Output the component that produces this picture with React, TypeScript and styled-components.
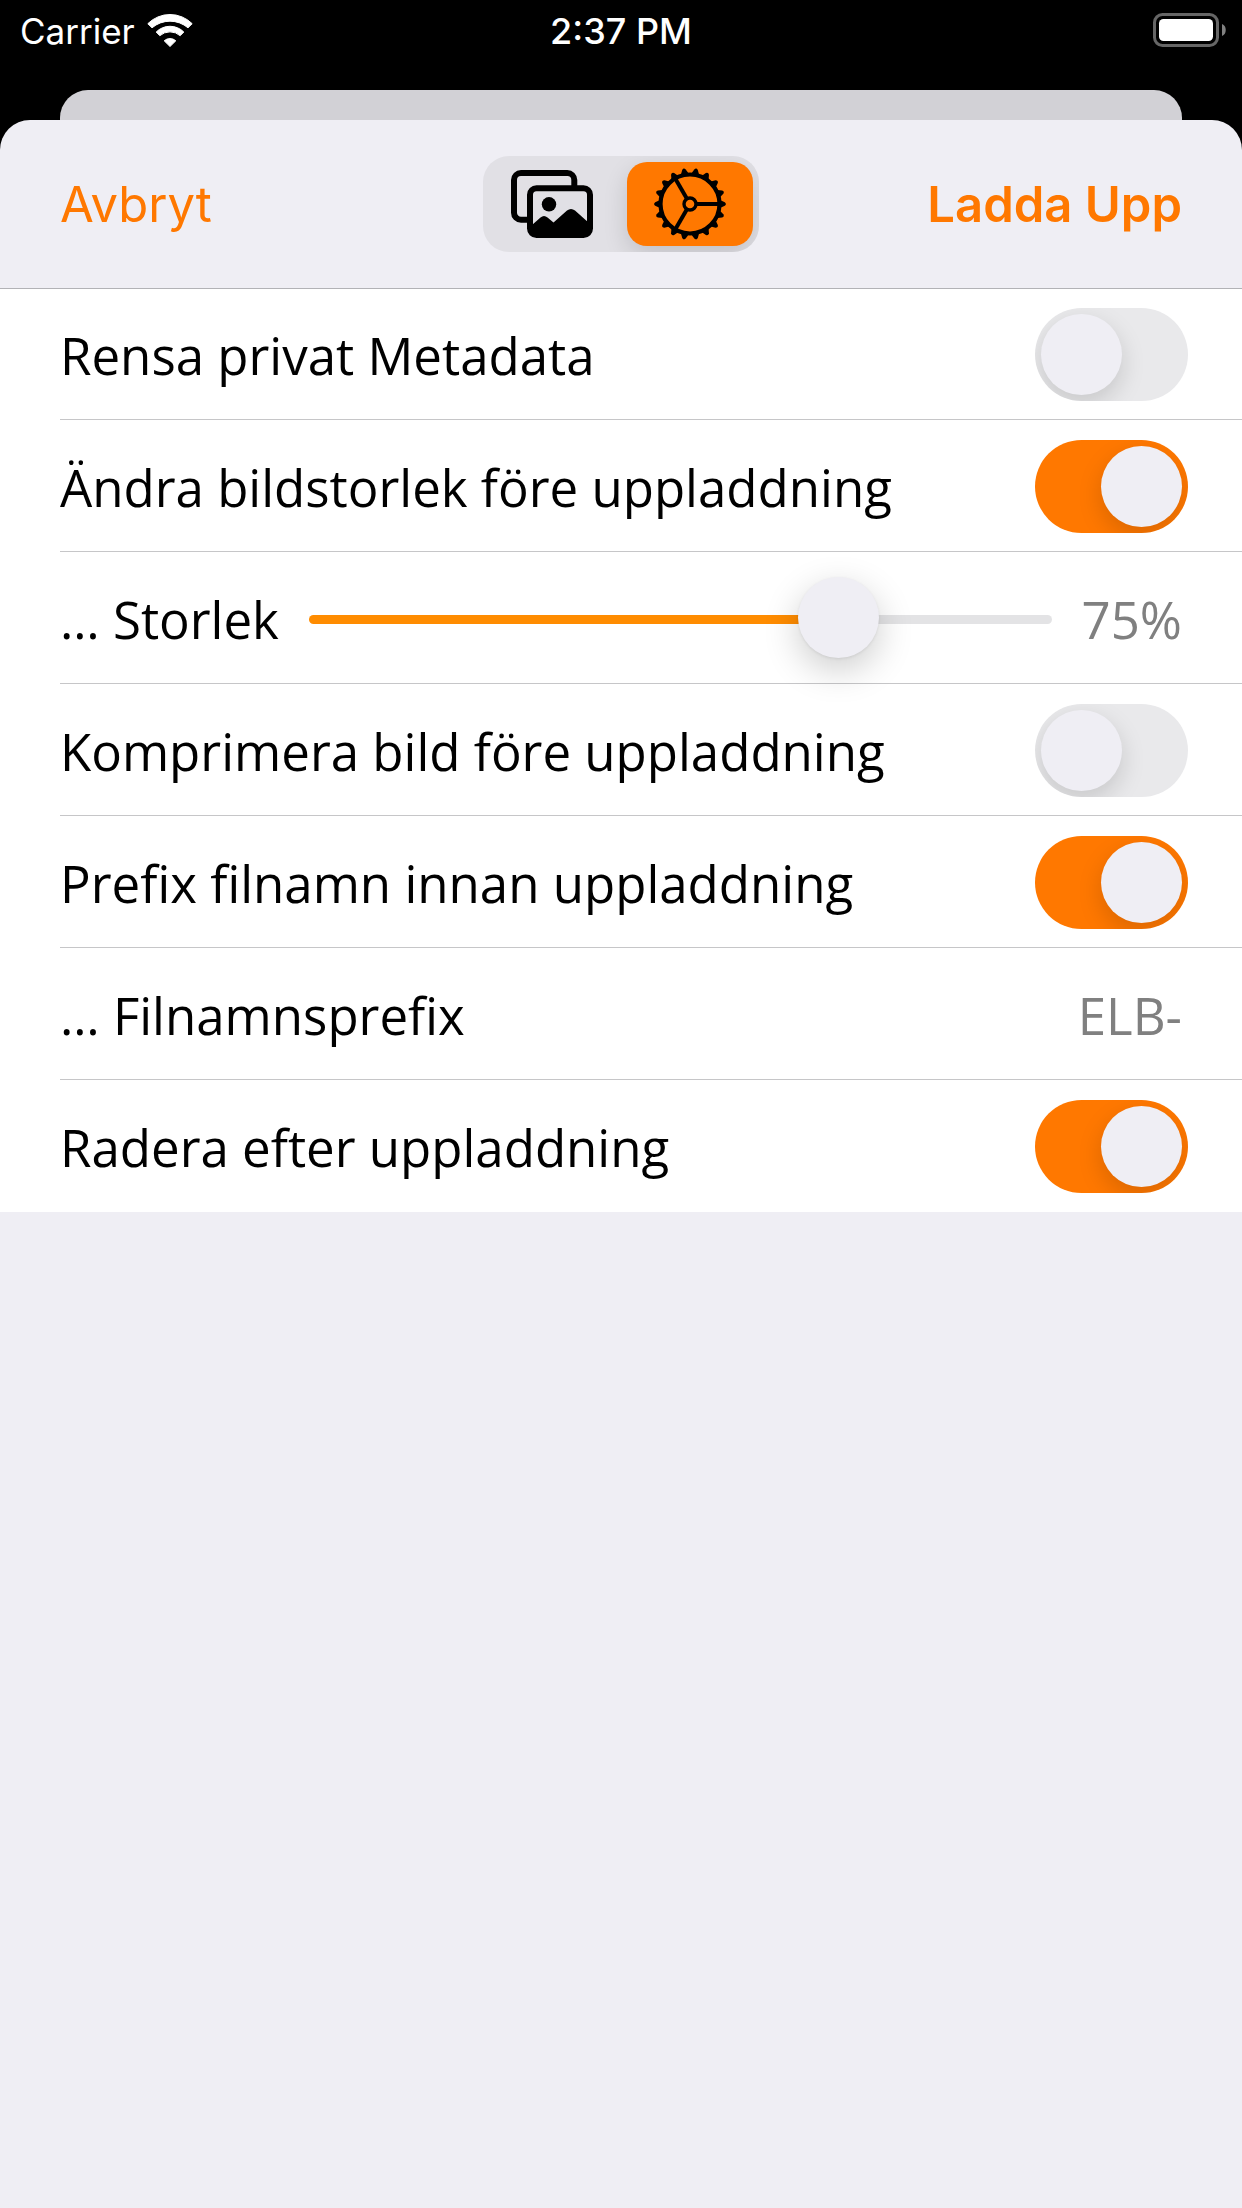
import React, { useState } from "react";
import styled, { createGlobalStyle } from "styled-components";

const color = {
  accent: "#ff7800",
  slider: "#ff8c00",
  sheet: "#efeef4",
  behind: "#d2d1d6",
  line: "#c6c6c8",
  headerLine: "#b2b2b6",
  muted: "#808080",
  track: "#e3e3e5",
  off: "#e9e9eb",
};

const uiFont = `Inter, "Liberation Sans", sans-serif`;
const textFont = `"Open Sans", "Noto Sans", sans-serif`;

const GlobalStyle = createGlobalStyle`
  *, *::before, *::after { box-sizing: border-box; }
  body { margin: 0; background: #000; }
  button, input { font: inherit; color: inherit; margin: 0; padding: 0; border: 0; background: none; }
`;

const Screen = styled.div`
  display: flex;
  flex-direction: column;
  min-height: 100vh;
  font-family: ${textFont};
`;

const StatusBar = styled.header`
  display: grid;
  grid-template-columns: 1fr auto 1fr;
  align-items: center;
  height: 60px;
  padding: 0 16px;
  margin-bottom: 30px;
  color: #fff;
  font-family: ${uiFont};
  font-size: 36px;
  line-height: 44px;
`;

const Carrier = styled.div`
  display: flex;
  align-items: center;
  gap: 12px;
  padding-left: 4px;
  font-size: 35px;
`;

const StatusText = styled.span`
  padding-top: 2px;
`;

const Clock = styled.time`
  padding-top: 2px;
  font-weight: 500;
`;

const StatusEnd = styled.div`
  display: flex;
  justify-content: flex-end;
`;

const BehindCard = styled.div`
  height: 30px;
  margin: 0 60px;
  border-radius: 28px 28px 0 0;
  background: ${color.behind};
`;

const Sheet = styled.main`
  flex: 1;
  border-radius: 30px 30px 0 0;
  background: ${color.sheet};
`;

const NavBar = styled.nav`
  display: grid;
  grid-template-columns: 1fr auto 1fr;
  align-items: center;
  height: 168px;
  padding: 0 60px;
`;

const NavButton = styled.button<{ $strong?: boolean }>`
  justify-self: ${(p) => (p.$strong ? "end" : "start")};
  padding-top: 2px;
  color: ${color.accent};
  font-family: ${uiFont};
  font-size: 49px;
  font-weight: ${(p) => (p.$strong ? 600 : 400)};
  line-height: 60px;
  cursor: pointer;
`;

const Segments = styled.div`
  display: flex;
  gap: 12px;
  padding: 6px;
  overflow: hidden;
  border-radius: 26px;
  background: #e1e0e5;
`;

const Segment = styled.button<{ $active: boolean }>`
  display: flex;
  align-items: center;
  justify-content: center;
  width: 126px;
  height: 84px;
  border-radius: 20px;
  color: #000;
  background: ${(p) => (p.$active ? color.accent : "transparent")};
  box-shadow: ${(p) => (p.$active ? "0 9px 24px rgba(0, 0, 0, 0.14)" : "none")};
  cursor: pointer;
`;

const List = styled.div`
  background: #fff;
  box-shadow: inset 0 1px 0 ${color.headerLine};
`;

const Row = styled.div`
  display: flex;
  align-items: center;
  gap: 30px;
  height: 132px;
  margin-left: 60px;
  padding: 20px 54px 18px 0;
  border-bottom: 1px solid ${color.line};
  font-size: 51px;
  line-height: 68px;

  &:last-child {
    border-bottom-color: transparent;
  }
`;

const RowLabel = styled.label`
  white-space: nowrap;
`;

const Switch = styled.input`
  appearance: none;
  flex: none;
  width: 153px;
  height: 93px;
  margin-left: auto;
  padding: 6px;
  overflow: hidden;
  border-radius: 47px;
  background: ${color.off};
  cursor: pointer;

  &::before {
    content: "";
    display: block;
    width: 81px;
    height: 81px;
    border-radius: 50%;
    background: ${color.sheet};
    box-shadow: 0 9px 24px rgba(0, 0, 0, 0.15);
  }

  &:checked {
    background: ${color.accent};
  }

  &:checked::before {
    margin-left: auto;
  }
`;

const Slider = styled.input`
  appearance: none;
  flex: 1;
  min-width: 0;
  height: 93px;
  padding-top: 2px;
  cursor: pointer;

  &::-webkit-slider-runnable-track {
    height: 9px;
    border-radius: 5px;
    background: linear-gradient(${color.slider}, ${color.slider}) 0 0 / var(--fill) 100% no-repeat
      ${color.track};
  }

  &::-webkit-slider-thumb {
    appearance: none;
    width: 81px;
    height: 81px;
    margin-top: -38px;
    border-radius: 50%;
    background: ${color.sheet};
    box-shadow: 0 1px 3px rgba(0, 0, 0, 0.08), 0 12px 36px rgba(0, 0, 0, 0.2);
  }
`;

const Value = styled.output`
  padding-right: 6px;
  color: ${color.muted};
`;

const TextField = styled.input`
  flex: 1;
  min-width: 0;
  padding-right: 6px;
  color: ${color.muted};
  text-align: right;
  outline: none;
`;

const WifiIcon = () => (
  <svg width="46" height="33" viewBox="0 0 46 33" fill="#fff" stroke="#fff" strokeWidth="1" strokeLinejoin="round">
    <path d="M.8 9.7A31.4 31.4 0 0 1 45.2 9.7L41 13.8A27.8 27.8 0 0 0 5 13.8Z" />
    <path d="M9.2 18A19.5 19.5 0 0 1 36.8 18L33.2 21.7A15.5 15.5 0 0 0 12.8 21.7Z" />
    <path d="M17.2 26.8A8.6 8.6 0 0 1 28.8 26.8L23 32.5Z" />
  </svg>
);

const BatteryIcon = () => (
  <svg width="73" height="34" viewBox="0 0 73 34">
    <rect x="1.5" y="1.5" width="63" height="31" rx="8" fill="none" stroke="#666" strokeWidth="3" />
    <rect x="6" y="6" width="54" height="22" rx="4.5" fill="#fff" />
    <path d="M69 11C74 12.5 74 21.5 69 23Z" fill="#808080" />
  </svg>
);

const PhotosIcon = () => (
  <svg width="82" height="68" viewBox="0 0 82 68" fill="none" stroke="currentColor" strokeWidth="6">
    <path d="M17 49.7H10A7 7 0 0 1 3 42.7V10A7 7 0 0 1 10 3H56.3A7 7 0 0 1 63.3 10V17" />
    <rect x="19" y="18.3" width="60" height="46.7" rx="6.5" />
    <circle cx="38" cy="34.3" r="7.2" fill="currentColor" stroke="none" />
    <path
      d="M21 55L29.5 47.5Q33 44.5 36.5 47.5L42.5 52.5L56 40.5Q60 37.5 64 40.5L78 53V64H21Z"
      fill="currentColor"
      stroke="none"
    />
  </svg>
);

const teeth = Array.from({ length: 18 }, (_, i) => i * 20);
const spokes = [0, 120, 240];

const GearIcon = () => (
  <svg width="72" height="72" viewBox="-36 -36 72 72" fill="none" stroke="currentColor">
    <circle r="29.5" strokeWidth="4.2" />
    <circle r="6" strokeWidth="3.4" />
    {spokes.map((a) => (
      <path key={a} d="M7 0H29" strokeWidth="4" transform={`rotate(${a})`} />
    ))}
    {teeth.map((a) => (
      <path
        key={a}
        d="M30.5 -3.8L34.8 -1.8Q37 0 34.8 1.8L30.5 3.8Z"
        fill="currentColor"
        stroke="none"
        transform={`rotate(${a})`}
      />
    ))}
  </svg>
);

function SwitchRow({ id, label, initial }: { id: string; label: string; initial: boolean }) {
  const [on, setOn] = useState(initial);
  return (
    <Row>
      <RowLabel htmlFor={id}>{label}</RowLabel>
      <Switch id={id} type="checkbox" role="switch" checked={on} onChange={(e) => setOn(e.target.checked)} />
    </Row>
  );
}

export default function App() {
  const [tab, setTab] = useState<"images" | "settings">("settings");
  const [size, setSize] = useState(74);
  const [prefix, setPrefix] = useState("ELB-");

  return (
    <>
      <GlobalStyle />
      <Screen>
        <StatusBar>
          <Carrier>
            <StatusText>Carrier</StatusText>
            <WifiIcon />
          </Carrier>
          <Clock>2:37 PM</Clock>
          <StatusEnd>
            <BatteryIcon />
          </StatusEnd>
        </StatusBar>
        <BehindCard />
        <Sheet>
          <NavBar>
            <NavButton type="button">Avbryt</NavButton>
            <Segments>
              <Segment
                type="button"
                aria-label="Bilder"
                aria-pressed={tab === "images"}
                $active={tab === "images"}
                onClick={() => setTab("images")}
              >
                <PhotosIcon />
              </Segment>
              <Segment
                type="button"
                aria-label="Inställningar"
                aria-pressed={tab === "settings"}
                $active={tab === "settings"}
                onClick={() => setTab("settings")}
              >
                <GearIcon />
              </Segment>
            </Segments>
            <NavButton type="button" $strong>
              Ladda Upp
            </NavButton>
          </NavBar>
          <List>
            <SwitchRow id="metadata" label="Rensa privat Metadata" initial={false} />
            <SwitchRow id="resize" label="Ändra bildstorlek före uppladdning" initial />
            <Row>
              <RowLabel htmlFor="size">… Storlek</RowLabel>
              <Slider
                id="size"
                type="range"
                min={0}
                max={100}
                value={size}
                onChange={(e) => setSize(Number(e.target.value))}
                style={{ "--fill": `${size}%` } as React.CSSProperties}
              />
              <Value htmlFor="size">{Math.round(size / 5) * 5}%</Value>
            </Row>
            <SwitchRow id="compress" label="Komprimera bild före uppladdning" initial={false} />
            <SwitchRow id="use-prefix" label="Prefix filnamn innan uppladdning" initial />
            <Row>
              <RowLabel htmlFor="prefix">… Filnamnsprefix</RowLabel>
              <TextField id="prefix" type="text" value={prefix} onChange={(e) => setPrefix(e.target.value)} />
            </Row>
            <SwitchRow id="delete" label="Radera efter uppladdning" initial />
          </List>
        </Sheet>
      </Screen>
    </>
  );
}
